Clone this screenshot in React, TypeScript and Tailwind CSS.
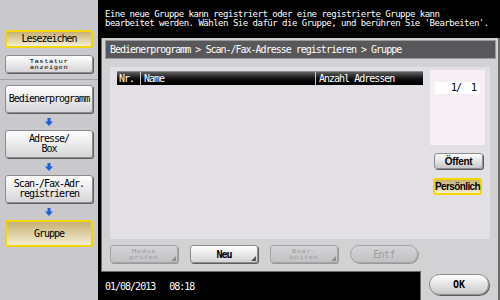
import type { ReactNode } from "react";

function SideButton({ children, active, className = "" }: { children: ReactNode; active?: boolean; className?: string }) {
  return (
    <div
      className={`mx-[5px] flex w-[88px] flex-col items-center justify-center rounded-[3px] text-black ${
        active
          ? "border-2 border-[#f2d800] bg-gradient-to-b from-[#c7b173] to-[#f5eed4]"
          : "border border-[#8c8c8c] bg-gradient-to-b from-[#ffffff] to-[#d6d6d8] shadow-[1px_1px_0_#5e5e5e]"
      } ${className}`}
    >
      {children}
    </div>
  );
}

function DownArrow() {
  return (
    <div className="flex h-[17px] items-center justify-center">
      <svg width="8" height="8" viewBox="0 0 8 8">
        <rect x="2.5" y="0" width="3" height="4" fill="#1a5fe0" />
        <polygon points="0,3.5 8,3.5 4,8" fill="#1a5fe0" />
      </svg>
    </div>
  );
}

function Sidebar() {
  return (
    <aside className="flex w-[98px] flex-col bg-[#c9c9cd]">
      <SideButton active className="mt-[30px] h-[18px]">
        <span className="text-[10px] leading-[10px] tracking-[-1px]">Lesezeichen</span>
      </SideButton>
      <SideButton className="mt-[7px] h-[18px]">
        <span className="text-[7px] leading-[5px] tracking-[0.6px] [transform:scaleY(0.8)]">Tastatur</span>
        <span className="text-[7px] leading-[6px] tracking-[0.6px] [transform:scaleY(0.8)]">anzeigen</span>
      </SideButton>
      <div className="mt-[6px] h-px w-full bg-[#a2a2a6]" />
      <SideButton className="mt-[5px] h-[28px]">
        <span className="text-[10px] leading-[10px] tracking-[-1px]">Bedienerprogramm</span>
      </SideButton>
      <DownArrow />
      <SideButton className="h-[28px]">
        <span className="text-[10px] leading-[10px] tracking-[-1px]">Adresse/</span>
        <span className="text-[10px] leading-[10px] tracking-[-1px]">Box</span>
      </SideButton>
      <DownArrow />
      <SideButton className="h-[28px]">
        <span className="text-[10px] leading-[10px] tracking-[-1px]">Scan-/Fax-Adr.</span>
        <span className="text-[10px] leading-[10px] tracking-[-1px]">registrieren</span>
      </SideButton>
      <DownArrow />
      <SideButton active className="h-[27px]">
        <span className="text-[10px] leading-[10px] tracking-[-1px]">Gruppe</span>
      </SideButton>
    </aside>
  );
}

function ActionButton({ children, disabled, pill, corner }: { children: ReactNode; disabled?: boolean; pill?: boolean; corner?: boolean }) {
  return (
    <div
      className={`relative flex h-[18px] w-[68px] flex-col items-center justify-center border ${pill ? "rounded-full" : "rounded-[3px]"} ${
        disabled
          ? "border-[#a4a4a6] bg-gradient-to-b from-[#d4d4d6] to-[#c2c2c4] text-[#9c9c9e] shadow-[1px_1px_0_#9a9a9a]"
          : "border-[#8c8c8c] bg-gradient-to-b from-[#ffffff] to-[#d4d4d6] text-black shadow-[1px_1px_0_#5e5e5e]"
      }`}
    >
      {children}
      {corner && (
        <span
          className={`absolute bottom-[1px] right-[1px] h-0 w-0 border-l-[5px] border-t-[5px] border-l-transparent ${
            disabled ? "border-t-transparent border-r-[#8e8e90]" : "border-t-transparent"
          }`}
          style={{ borderBottom: `5px solid ${disabled ? "#8e8e90" : "#555"}`, borderTop: "0", borderLeft: "5px solid transparent" }}
        />
      )}
    </div>
  );
}

export default function App() {
  return (
    <div className="flex h-[300px] w-[500px] overflow-hidden bg-black font-['DejaVu_Sans_Mono',monospace]">
      <Sidebar />
      <main className="flex flex-1 flex-col">
        <header className="h-[38px] pl-[7px] pt-[10px] text-[9px] leading-[9px] tracking-[-0.5px] text-white">
          <p className="whitespace-nowrap">Eine neue Gruppe kann registriert oder eine registrierte Gruppe kann</p>
          <p className="whitespace-nowrap">bearbeitet werden. Wählen Sie dafür die Gruppe, und berühren Sie 'Bearbeiten'.</p>
        </header>

        <div className="ml-[3px] flex flex-1 flex-col">
          <section className="flex h-[233px] flex-col border-l border-r-2 border-[#6a6a6a] bg-[#d2d2d4]">
            <div className="ml-[3px] mr-[2px] mt-[2px] flex h-[19px] items-center border border-[#9a9a9c] bg-[#58585a] pl-[4px] text-[10px] tracking-[-1px] text-white">
              <span className="whitespace-nowrap">Bedienerprogramm &gt; Scan-/Fax-Adresse registrieren &gt; Gruppe</span>
            </div>

            <div className="ml-[8px] mr-[8px] mt-[8px] flex h-[172px] items-start bg-[#e2e0e4] pl-[7px]">
              <div className="mt-[4px] flex h-[14px] w-[306px] items-center border-t border-[#8a8a8a] bg-gradient-to-b from-[#606060] via-[#141414] to-[#000000] text-[10px] tracking-[-1px] text-white">
                <span className="w-[24px] border-r border-[#c8c8c8] pl-[2px] leading-[13px]">Nr.</span>
                <span className="w-[175px] border-r border-[#c8c8c8] pl-[3px] leading-[13px]">Name</span>
                <span className="flex-1 whitespace-nowrap pl-[3px] leading-[13px]">Anzahl Adressen</span>
              </div>

              <div className="ml-[7px] mt-[3px] flex w-[55px] flex-col">
                <div className="h-[75px] bg-[#f6eff6] pt-[12px]">
                  <div className="ml-[5px] h-[12px] w-[45px] whitespace-pre bg-white pr-[4px] text-right text-[10px] leading-[12px] tracking-[-1px] text-black">
                    {"1/  1"}
                  </div>
                </div>
                <div className="ml-[4px] mt-[8px] flex h-[16px] w-[49px] items-center justify-center rounded-[3px] border border-[#8c8c8c] bg-gradient-to-b from-[#ffffff] to-[#c8c8ca] font-['Liberation_Sans',sans-serif] text-[10px] font-bold tracking-[-0.3px] text-black shadow-[1px_1px_0_#5e5e5e]">
                  Öffent
                </div>
                <div className="ml-[3px] mt-[9px] flex h-[17px] w-[49px] items-center justify-center rounded-[3px] border-2 border-[#f2d800] bg-gradient-to-b from-[#c7b173] to-[#f5eed4] font-['Liberation_Sans',sans-serif] text-[10px] font-bold tracking-[-0.6px] text-black">
                  Persönlich
                </div>
              </div>
            </div>

            <div className="ml-[8px] mt-[6px] flex gap-[12px]">
              <ActionButton disabled corner>
                <span className="text-[7px] leading-[5px] tracking-[0.6px] [transform:scaleY(0.8)]">Modus</span>
                <span className="text-[7px] leading-[6px] tracking-[0.6px] [transform:scaleY(0.8)]">prüfen</span>
              </ActionButton>
              <ActionButton corner>
                <span className="text-[10px] font-bold tracking-[-1px]">Neu</span>
              </ActionButton>
              <ActionButton disabled corner>
                <span className="text-[7px] leading-[5px] tracking-[0.6px] [transform:scaleY(0.8)]">Bear-</span>
                <span className="text-[7px] leading-[6px] tracking-[0.6px] [transform:scaleY(0.8)]">beiten</span>
              </ActionButton>
              <ActionButton disabled pill>
                <span className="text-[10px] tracking-[-0.6px]">Entf</span>
              </ActionButton>
            </div>
          </section>

          <div className="flex flex-1">
            <div className="flex flex-1 items-center gap-[14px] border-r border-t border-[#6a6a6a] bg-black pl-[4px] text-[10px] tracking-[-1px] text-white">
              <span>01/08/2013</span>
              <span>08:18</span>
            </div>
            <div className="flex w-[79px] items-start border-r-2 border-[#6a6a6a] bg-[#d2d2d4] pl-[8px] pt-[3px]">
              <div className="flex h-[21px] w-[60px] items-center justify-center rounded-full border border-[#8c8c8c] bg-gradient-to-b from-[#ffffff] to-[#c8c8ca] text-[10px] font-bold text-black shadow-[1px_1px_0_#5e5e5e]">
                OK
              </div>
            </div>
          </div>
        </div>
      </main>
    </div>
  );
}
